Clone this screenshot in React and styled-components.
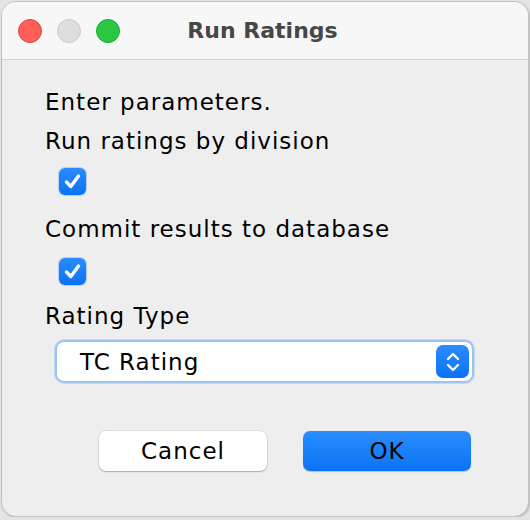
import React from "react";
import styled, { createGlobalStyle } from "styled-components";

const GlobalStyle = createGlobalStyle`
  html, body {
    margin: 0;
    padding: 0;
    background: #e4e4e4;
  }
  body {
    font-family: "DejaVu Sans", "Liberation Sans", sans-serif;
  }
`;

const Window = styled.div`
  width: 528px;
  height: 516px;
  margin: 1px 0 0 1px;
  box-sizing: border-box;
  border: 1px solid #c2c2c2;
  border-radius: 15px;
  background: #eeeeee;
  overflow: hidden;
  display: flex;
  flex-direction: column;
  box-shadow: 1px 1px 2px rgba(0, 0, 0, 0.18);
`;

const TitleBar = styled.div`
  height: 57px;
  flex-shrink: 0;
  display: grid;
  grid-template-columns: 1fr auto 1fr;
  align-items: center;
  padding: 0 16px;
  background: #f7f7f7;
  border-bottom: 1px solid #d2d2d2;
`;

const Lights = styled.div`
  display: flex;
  gap: 15px;
`;

const Light = styled.span`
  width: 24px;
  height: 24px;
  box-sizing: border-box;
  border-radius: 50%;
  background: ${({ $color }) => $color};
  border: 1px solid ${({ $edge }) => $edge};
`;

const Title = styled.div`
  font-size: 22px;
  font-weight: 700;
  color: #474747;
  margin-left: -5px;
`;

const Body = styled.div`
  display: flex;
  flex-direction: column;
  align-items: flex-start;
  padding: 27px 0 0 43px;
`;

const Label = styled.div`
  font-size: 23px;
  letter-spacing: 1px;
  line-height: 30px;
  height: 30px;
  color: #000;
  margin-top: ${({ $top }) => $top || 0}px;
`;

const Check = styled.span`
  width: 27px;
  height: 27px;
  margin: ${({ $top }) => $top}px 0 0 14px;
  border-radius: 6px;
  background: linear-gradient(#2a8cff, #0a72f4);
  display: flex;
  align-items: center;
  justify-content: center;
  box-shadow: 0 0 0 1px rgba(20, 110, 240, 0.25);
`;

const Select = styled.div`
  width: 419px;
  height: 43px;
  box-sizing: border-box;
  margin: 9px 0 0 10px;
  background: #fff;
  border: 2px solid #9fc3f1;
  border-radius: 9px;
  box-shadow: 0 0 0 1px #c4daf6;
  display: flex;
  align-items: center;
  justify-content: space-between;
  padding: 0 3px 0 23px;
`;

const SelectText = styled.span`
  font-size: 23px;
  letter-spacing: 1px;
  color: #000;
`;

const Stepper = styled.span`
  width: 33px;
  height: 33px;
  border-radius: 7px;
  background: linear-gradient(#2a8cff, #0a72f4);
  display: flex;
  align-items: center;
  justify-content: center;
`;

const Buttons = styled.div`
  display: flex;
  gap: 36px;
  margin: 48px 0 0 54px;
`;

const Button = styled.div`
  width: 168px;
  height: 40px;
  box-sizing: border-box;
  border-radius: 7px;
  display: flex;
  align-items: center;
  justify-content: center;
  font-size: 23px;
  letter-spacing: 1px;
  color: #000;
  background: ${({ $primary }) =>
    $primary ? "linear-gradient(#2a8dff, #0a73f5)" : "#ffffff"};
  box-shadow: ${({ $primary }) =>
    $primary
      ? "0 0.5px 1px rgba(0, 0, 0, 0.2)"
      : "0 0 0 0.5px rgba(0, 0, 0, 0.12), 0 1px 1.5px rgba(0, 0, 0, 0.25)"};
`;

const CheckMark = () => (
  <svg width="21" height="21" viewBox="0 0 21 21">
    <path
      d="M4.5 11 L8.8 15.5 L16.5 5"
      fill="none"
      stroke="#fff"
      strokeWidth="3.4"
      strokeLinecap="round"
      strokeLinejoin="round"
    />
  </svg>
);

const Chevrons = () => (
  <svg width="20" height="26" viewBox="0 0 20 26">
    <path
      d="M5 10 L10 5 L15 10 M5 16 L10 21 L15 16"
      fill="none"
      stroke="#fff"
      strokeWidth="2.4"
      strokeLinecap="round"
      strokeLinejoin="round"
    />
  </svg>
);

const App = () => {
  return (
    <>
      <GlobalStyle />
      <Window>
        <TitleBar>
          <Lights>
            <Light $color="#ff5f57" $edge="#e0443e" />
            <Light $color="#dedede" $edge="#cacaca" />
            <Light $color="#2ac840" $edge="#1ea935" />
          </Lights>
          <Title>Run Ratings</Title>
          <div />
        </TitleBar>
        <Body>
          <Label>Enter parameters.</Label>
          <Label $top={9}>Run ratings by division</Label>
          <Check $top={12}>
            <CheckMark />
          </Check>
          <Label $top={19}>Commit results to database</Label>
          <Check $top={14}>
            <CheckMark />
          </Check>
          <Label $top={16}>Rating Type</Label>
          <Select>
            <SelectText>TC Rating</SelectText>
            <Stepper>
              <Chevrons />
            </Stepper>
          </Select>
          <Buttons>
            <Button>Cancel</Button>
            <Button $primary>OK</Button>
          </Buttons>
        </Body>
      </Window>
    </>
  );
};

export default App;
